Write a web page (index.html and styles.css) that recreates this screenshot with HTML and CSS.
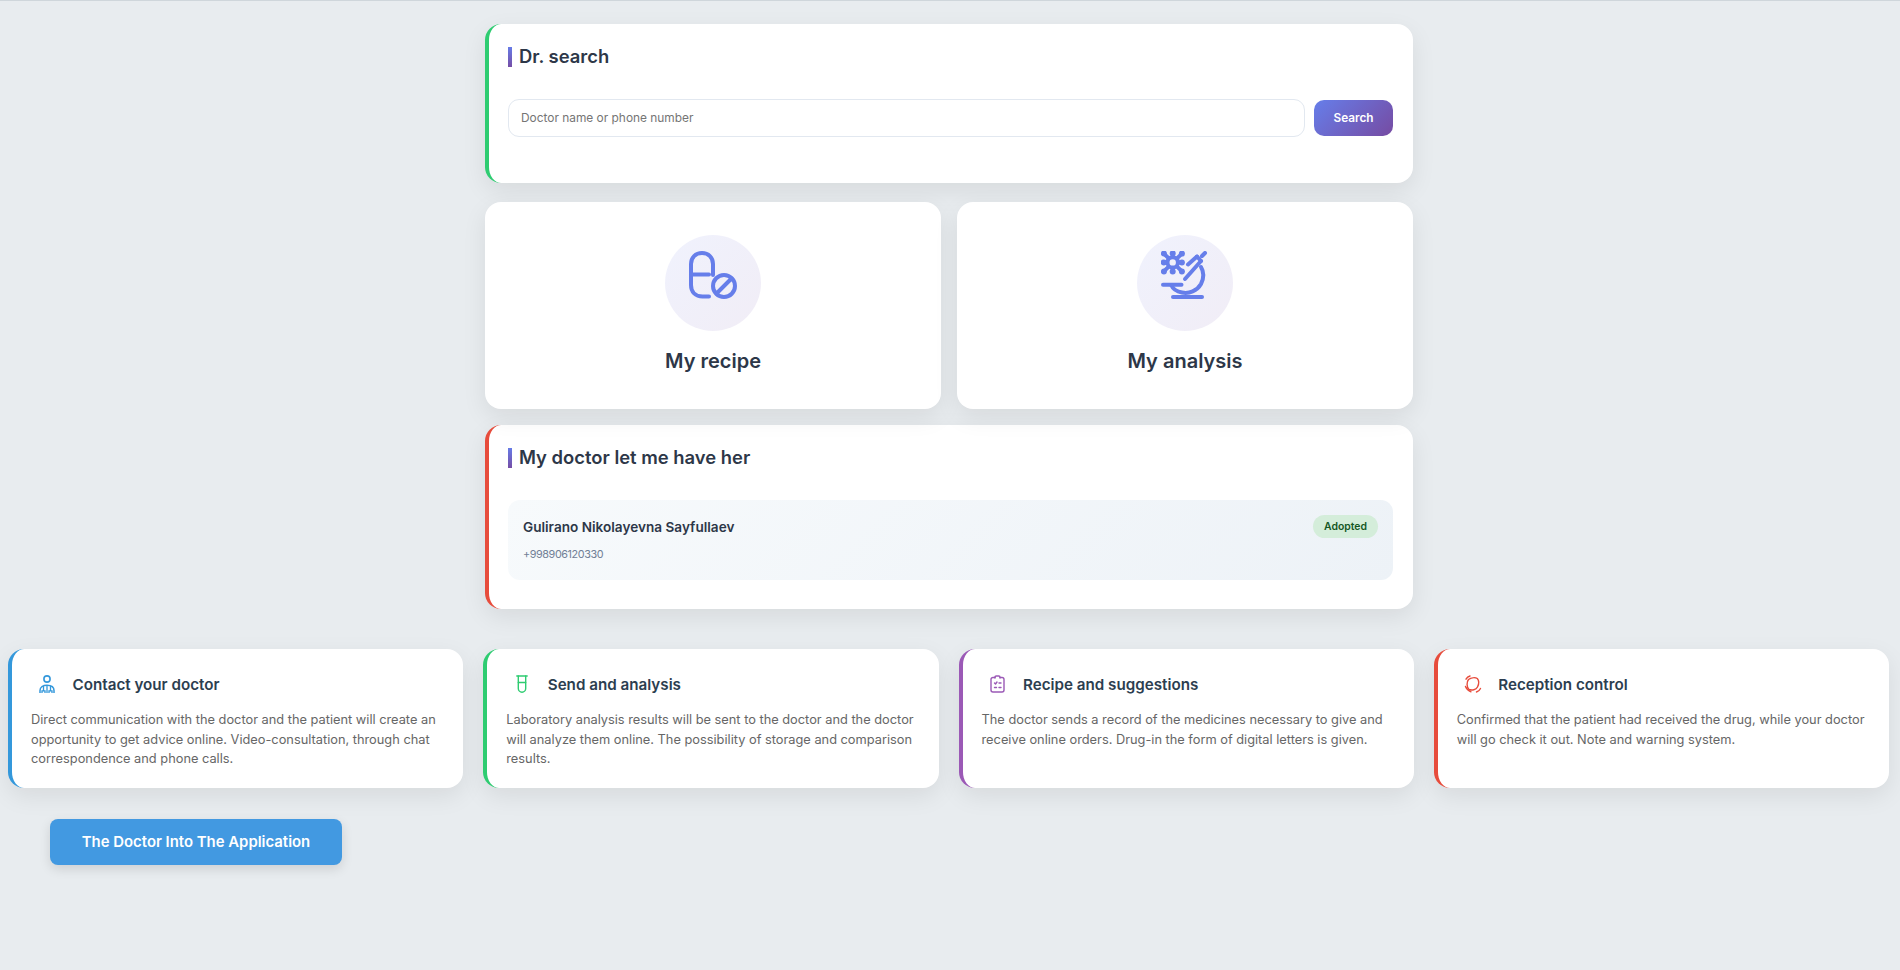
FILE: index.html
```html
<!DOCTYPE html>
<html lang="en">
<head>
    <meta charset="UTF-8">
    <meta name="viewport" content="width=device-width, initial-scale=1.0">
    <title>Patient Panel</title>
    <link rel="stylesheet" href="styles.css">
</head>
<body>
    <div class="container">
        <section class="card card-green search-card">
            <h2 class="section-title">Dr. search</h2>
            <div class="search-row">
                <input type="text" class="search-input" placeholder="Doctor name or phone number" aria-label="Search for a doctor">
                <button class="search-btn">Search</button>
            </div>
        </section>

        <div class="tiles">
            <a class="tile" href="#">
                <span class="tile-icon">
                    <svg viewBox="0 0 48 48" width="48" height="48" fill="none" stroke="currentColor" stroke-width="4" stroke-linecap="round" stroke-linejoin="round">
                        <path d="M20 45.500h-6.500C6.500 45.500 2 41 2 34V13C2 6.500 6.500 2 13 2s11 4.500 11 11v11"/>
                        <path d="M2 23.500h18"/>
                        <circle cx="35" cy="35" r="11"/>
                        <path d="M27.500 42.500l15-15"/>
                    </svg>
                </span>
                <h3>My recipe</h3>
            </a>
            <a class="tile" href="#">
                <span class="tile-icon">
                    <svg viewBox="0 0 48 48" width="48" height="48" fill="none" stroke="currentColor" stroke-width="4" stroke-linecap="round" stroke-linejoin="round">
                        <path d="M2.900 2.600l18 17.800M20.900 2.600L2.900 20.400M11.700 2.400v18.200M2.700 11.400h18.200"/>
                        <circle cx="11.700" cy="11.400" r="5.200" class="tile-gap"/>
                        <g fill="currentColor" stroke="none">
                            <circle cx="2.900" cy="2.600" r="3"/><circle cx="11.700" cy="2.400" r="3"/><circle cx="20.900" cy="2.600" r="3"/>
                            <circle cx="2.700" cy="11.400" r="3"/><circle cx="20.900" cy="11.400" r="3"/>
                            <circle cx="2.900" cy="20.400" r="3"/><circle cx="11.700" cy="20.600" r="3"/><circle cx="20.900" cy="20.400" r="3"/>
                        </g>
                        <path d="M27 13.500L36 5.500"/>
                        <path d="M40 10L24 28"/>
                        <path d="M36 5.500l4 4.500M41 5l3-3"/>
                        <path d="M40 16C43 21 43 27 40 33 36 40 28 43 21 41.500 16 40.500 12 38 10.500 34.500"/>
                        <path d="M2 33.700h18.500"/>
                        <path d="M12 46h29"/>
                    </svg>
                </span>
                <h3>My analysis</h3>
            </a>
        </div>

        <section class="card card-red doctor-card">
            <h2 class="section-title">My doctor let me have her</h2>
            <div class="doctor-item">
                <div class="doctor-top">
                    <span class="doctor-name">Gulirano Nikolayevna Sayfullaev</span>
                    <span class="badge">Adopted</span>
                </div>
                <div class="doctor-phone">+998906120330</div>
            </div>
        </section>
    </div>

    <div class="features">
        <div class="feature feature-blue">
            <div class="feature-head">
                <span class="feature-icon">
                    <svg viewBox="0 0 16 18" width="16" height="18" fill="none" stroke="currentColor" stroke-width="1.600">
                        <circle cx="8" cy="4" r="3.100"/>
                        <path d="M1 18v-2.500C1 12 4 10.200 8 10.200s7 1.800 7 5.300V18" stroke-width="1.500"/>
                        <path d="M4.500 11v4.500M11.500 11v4.500M3 18v-2.200h3V18M10 18v-2.200h3V18M8 10.500V18" stroke-width="1.300"/>
                    </svg>
                </span>
                <h4>Contact your doctor</h4>
            </div>
            <p>Direct communication with the doctor and the patient will create an opportunity to get advice online. Video-consultation, through chat correspondence and phone calls.</p>
        </div>
        <div class="feature feature-green">
            <div class="feature-head">
                <span class="feature-icon">
                    <svg viewBox="0 0 12 18" width="12" height="18" fill="none" stroke="currentColor" stroke-width="1.400" stroke-linecap="round">
                        <path d="M.8 1h10.400"/>
                        <path d="M2.300 1v12.500a3.700 3.700 0 0 0 7.400 0V1"/>
                        <path d="M2.300 7.500h7.400"/>
                    </svg>
                </span>
                <h4>Send and analysis</h4>
            </div>
            <p>Laboratory analysis results will be sent to the doctor and the doctor will analyze them online. The possibility of storage and comparison results.</p>
        </div>
        <div class="feature feature-purple">
            <div class="feature-head">
                <span class="feature-icon">
                    <svg viewBox="0 0 15 18" width="15" height="18" fill="none" stroke="currentColor" stroke-width="1.400" stroke-linecap="round" stroke-linejoin="round">
                        <path d="M5 2.500H3C1.800 2.500 1 3.300 1 4.500V15c0 1.200.8 2 2 2h9c1.200 0 2-.8 2-2V4.500c0-1.200-.8-2-2-2h-2"/>
                        <path d="M5 3V2.200C5 1.500 5.500 1 6.200 1h2.600C9.500 1 10 1.500 10 2.200V3"/>
                        <path d="M4.500 8l1 1 1.500-2M9 8h2M4.500 12.500h2M9 12.500h2"/>
                    </svg>
                </span>
                <h4>Recipe and suggestions</h4>
            </div>
            <p>The doctor sends a record of the medicines necessary to give and receive online orders. Drug-in the form of digital letters is given.</p>
        </div>
        <div class="feature feature-red">
            <div class="feature-head">
                <span class="feature-icon">
                    <svg viewBox="0 0 18 18" width="18" height="18" fill="none" stroke="currentColor" stroke-width="1.400" stroke-linecap="round" stroke-linejoin="round">
                        <path d="M4.500 4.500C7 2.800 11 2.200 13.300 3.500 15 5.500 15 9 13.500 12 12 15 8 15.500 5 14.500 2.500 12 2.500 7 4.500 4.500z"/>
                        <path d="M2 4.200C2.800 2.800 4 1.600 6 1"/>
                        <path d="M16.500 13.500C15.800 15 14.500 16.300 12.500 17"/>
                        <path d="M1.500 11.500C2.500 14 4 15.800 7 16.800"/>
                    </svg>
                </span>
                <h4>Reception control</h4>
            </div>
            <p>Confirmed that the patient had received the drug, while your doctor will go check it out. Note and warning system.</p>
        </div>
    </div>

    <div class="cta">
        <button class="cta-btn">The Doctor Into The Application</button>
    </div>
</body>
</html>
```

FILE: styles.css
```css
* {
    margin: 0;
    padding: 0;
    box-sizing: border-box;
    font-family: 'Inter', 'Open Sans', sans-serif;
}

body {
    background-color: #e8ecef;
    border-top: 1px solid #cfd6db;
    min-height: 100vh;
}

.container {
    width: 928px;
    margin-left: 485px;
    padding-top: 23px;
}

.card {
    background-color: white;
    border-radius: 16px;
    border-left: 4px solid;
    box-shadow: 0 8px 25px rgba(0, 0, 0, 0.08);
}

.card-green {
    border-left-color: #2ecc71;
}

.card-red {
    border-left-color: #e74c3c;
}

.section-title {
    display: flex;
    align-items: center;
    height: 20px;
    padding-left: 7px;
    padding-bottom: 3px;
    border-left: 4px solid #667eea;
    border-image: linear-gradient(#667eea, #764ba2) 1;
    color: #2d3748;
    font-size: 18.4px;
    font-weight: 600;
}

.search-card {
    height: 159px;
    padding: 23px 20px 0 19px;
}

.search-row {
    display: flex;
    align-items: center;
    gap: 9px;
    margin-top: 32px;
}

.search-input {
    flex: 1;
    height: 38px;
    padding: 0 12px 1px;
    border: 1px solid #e2e8f0;
    border-radius: 11px;
    font-size: 11.9px;
}

.search-input::placeholder {
    color: #757575;
}

.search-btn {
    width: 79px;
    height: 36px;
    border: none;
    border-radius: 10px;
    background: linear-gradient(135deg, #667eea, #764ba2);
    color: white;
    font-size: 11.8px;
    font-weight: 600;
    cursor: pointer;
}

.tiles {
    display: grid;
    grid-template-columns: 1fr 1fr;
    gap: 16px;
    margin-top: 19px;
}

.tile {
    display: flex;
    flex-direction: column;
    align-items: center;
    height: 207px;
    padding-top: 33px;
    background-color: white;
    border-radius: 16px;
    box-shadow: 0 8px 25px rgba(0, 0, 0, 0.08);
    text-decoration: none;
}

.tile-icon {
    display: flex;
    align-items: center;
    justify-content: center;
    width: 96px;
    height: 96px;
    padding-bottom: 16px;
    border-radius: 50%;
    background: linear-gradient(135deg, #f0f2fd, #f1edf6);
    color: #667eea;
}

.tile-gap {
    fill: #f0f0fa;
}

.tile h3 {
    margin-top: 18px;
    color: #2d3748;
    font-size: 20px;
    font-weight: 600;
}

.doctor-card {
    height: 184px;
    margin-top: 16px;
    padding: 23px 20px 0 19px;
}

.doctor-item {
    height: 80px;
    margin-top: 32px;
    padding: 15px 15px 0;
    border-radius: 12px;
    background: linear-gradient(135deg, #f7fafc, #edf2f7);
}

.doctor-top {
    display: flex;
    align-items: center;
    justify-content: space-between;
}

.doctor-name {
    color: #2d3748;
    font-size: 13.6px;
    font-weight: 600;
}

.badge {
    display: flex;
    align-items: center;
    justify-content: center;
    width: 65px;
    height: 23px;
    border-radius: 12px;
    background-color: #d4edda;
    color: #155724;
    font-size: 10.4px;
    font-weight: 600;
}

.doctor-phone {
    margin-top: 10px;
    color: #718096;
    font-size: 10.8px;
    letter-spacing: -0.4px;
}

.features {
    display: grid;
    grid-template-columns: repeat(4, 1fr);
    gap: 20px;
    margin-top: 40px;
    padding: 0 11px 0 8px;
}

.feature {
    height: 139px;
    padding: 19px;
    background-color: white;
    border-radius: 16px;
    border-left: 4px solid;
    box-shadow: 0 8px 25px rgba(0, 0, 0, 0.08);
}

.feature-blue {
    border-left-color: #3498db;
}

.feature-green {
    border-left-color: #2ecc71;
}

.feature-purple {
    border-left-color: #9b59b6;
}

.feature-red {
    border-left-color: #e74c3c;
}

.feature-head {
    display: flex;
    align-items: center;
    gap: 9.500px;
    margin-bottom: 10px;
}

.feature-icon {
    display: flex;
    align-items: center;
    justify-content: center;
    width: 32px;
    height: 32px;
}

.feature-blue .feature-icon {
    color: #3498db;
}

.feature-green .feature-icon {
    color: #2ecc71;
}

.feature-purple .feature-icon {
    color: #9b59b6;
}

.feature-red .feature-icon {
    color: #e74c3c;
}

.feature-head h4 {
    color: #2c3e50;
    font-size: 15.2px;
    font-weight: 600;
}

.feature p {
    color: #666;
    font-size: 12.8px;
    line-height: 19.5px;
}

.cta {
    margin-top: 31px;
    padding-left: 50px;
}

.cta-btn {
    width: 292px;
    height: 46px;
    border: none;
    border-radius: 8px;
    background-color: #4299e1;
    color: white;
    font-size: 14.9px;
    font-weight: 600;
    box-shadow: 0 4px 12px rgba(0, 0, 0, 0.12);
    cursor: pointer;
}
```
